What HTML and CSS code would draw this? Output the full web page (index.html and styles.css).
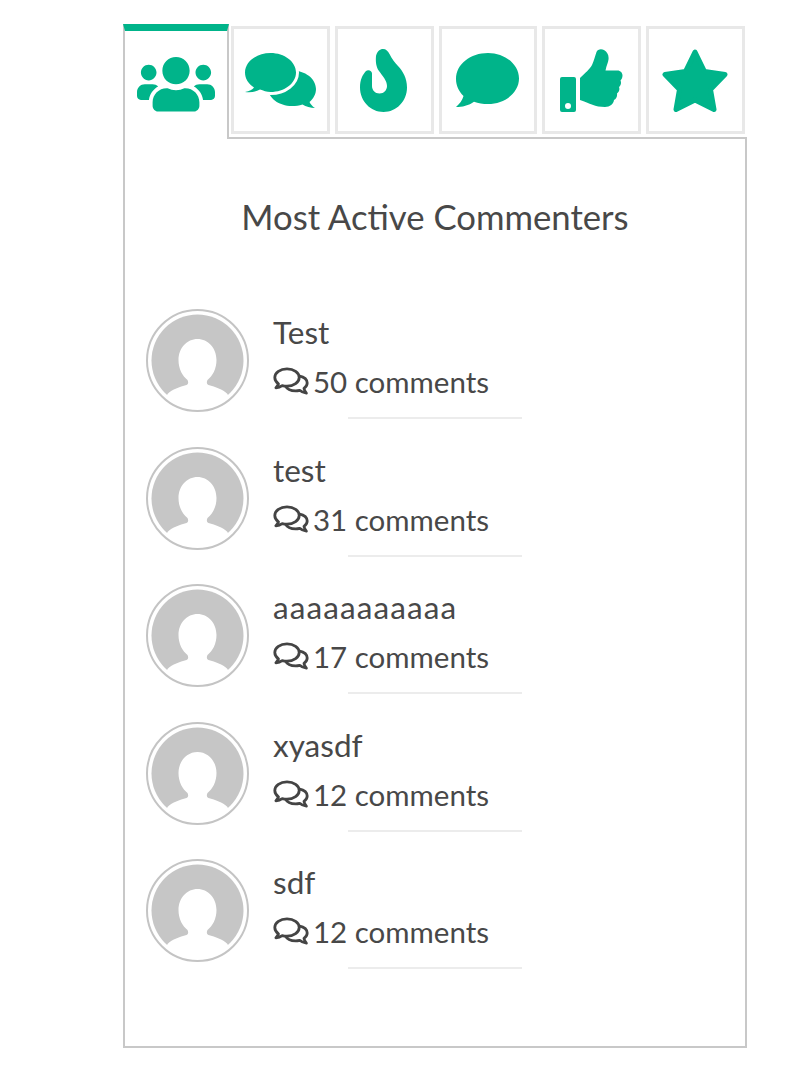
FILE: index.html
```html
<!DOCTYPE html>
<html lang="en">
<head>
<meta charset="utf-8">
<title>Most Active Commenters</title>
<link rel="stylesheet" href="styles.css">
</head>
<body>
<svg class="defs" width="0" height="0" aria-hidden="true">
  <defs>
    <symbol id="avatar" viewBox="0 0 103 103">
      <circle cx="51.5" cy="51.5" r="50.5" fill="#fff" stroke="#c4c4c4" stroke-width="2"/>
      <circle cx="51.5" cy="51.5" r="46" fill="#c6c6c6"/>
      <clipPath id="avatar-clip"><circle cx="51.5" cy="51.5" r="48.500"/></clipPath>
      <path clip-path="url(#avatar-clip)" fill="#fff" d="M51.5 30c-10.500 0-19 9-19 21 0 9 4 16 9 20 1 2 1 4-1 5-7 2-14 4-19 9l-6 18h72l-6-18c-5-5-12-7-19-9-2-1-2-3-1-5 5-4 9-11 9-20 0-12-8.500-21-19-21z"/>
    </symbol>
    <symbol id="small-comments" viewBox="0 0 36 28">
      <g fill="none" stroke="#444" stroke-width="2.800" stroke-linejoin="round">
        <path d="M14 1.800c-6.800 0-12.200 3.900-12.200 8.700 0 2.600 1.500 4.800 3.700 6.300-.5 1.500-1.400 2.900-2.600 4 2.400-.2 4.600-1 6.300-2.200 1.500.4 3.100.6 4.800.6 6.800 0 12.200-3.900 12.200-8.700S20.800 1.800 14 1.800z"/>
        <path d="M26 8.800c4.800 1 8.200 3.700 8.200 7.200 0 2.200-1.300 4-3.200 5.400.3 1.700 1.100 3.300 2.400 4.800-2.800-.3-5-1.400-6.700-2.900-1.300.3-2.600.5-4 .5-4.800 0-8.800-2-10.300-5"/>
      </g>
    </symbol>
  </defs>
</svg>
<main class="widget">
  <nav class="tabs">
    <a class="tab-active">
      <svg class="icon-users" viewBox="0 0 640 448"><path transform="translate(0 -32)" d="M96 224c35.300 0 64-28.700 64-64s-28.700-64-64-64-64 28.700-64 64 28.700 64 64 64zm448 0c35.300 0 64-28.700 64-64s-28.700-64-64-64-64 28.700-64 64 28.700 64 64 64zm32 32h-64c-17.600 0-33.500 7.100-45.100 18.600 40.300 22.100 68.900 62 75.100 109.400h66c17.700 0 32-14.300 32-32v-32c0-35.300-28.700-64-64-64zm-256 0c61.900 0 112-50.100 112-112S381.900 32 320 32 208 82.100 208 144s50.100 112 112 112zm76.800 32h-8.300c-20.800 10-43.900 16-68.500 16s-47.600-6-68.500-16h-8.300C179.600 288 128 339.600 128 403.200V432c0 26.500 21.500 48 48 48h288c26.500 0 48-21.500 48-48v-28.800c0-63.600-51.600-115.200-115.200-115.200zm-223.700-13.400C161.500 263.100 145.600 256 128 256H64c-35.300 0-64 28.700-64 64v32c0 17.700 14.300 32 32 32h65.900c6.300-47.400 34.900-87.300 75.200-109.400z"/></svg>
    </a>
    <div class="tab-group">
      <a class="tab">
        <svg class="icon-comments" viewBox="0 0 71 55"><path d="M47 17.500c13 0 24 8 24 18.500 0 5-2.500 9.500-6.500 13 .8 2 2.800 4.300 5.500 6-4.500 0-9-1.200-12.500-3.500-3.300 1-6.800 1.500-10.500 1.500-13 0-24-8-24-18 0-10.500 11-17.500 24-17.500z"/><path stroke="#fff" stroke-width="6" paint-order="stroke" d="M25.500 0C11.500 0 0 8.700 0 19.500c0 6 3.500 11.500 9 15-1.500 2-4.500 4-9 4.500 5.500 1 11-.300 15-2.500 3.300 1 6.800 2.500 10.500 2.500C39.500 39 51 30.300 51 19.500S39.500 0 25.500 0z"/></svg>
      </a>
      <a class="tab">
        <svg class="icon-flame" viewBox="0 0 47 63"><path d="M23 0c3 0 5 2 6.500 5 2.500 5 5 8 8.500 12 5 5.500 9 12 9 21.500C47 52 36.500 63 23.500 63S0 52 0 38.500C0 31 2.500 26 5.500 22.500c2.500-2.500 6.500-1 6.500 2L12 37C12 41 15 44.500 19.500 44.500S27 41 27 37C27 31.500 22.500 27 19 22 16 18 15.500 12 16 7 17 2.500 20 0 23 0z"/></svg>
      </a>
      <a class="tab">
        <svg class="icon-bubble" viewBox="0 0 63 54"><path d="M32 0C14.500 0 0 11 0 26c0 6.500 2.800 12.500 7.500 17C6.500 47 3.500 51 0 54c6 0 13-1.500 18-5.300 4.200 1.500 9 2.300 14 2.300 17 0 31-11.500 31-25.500S49 0 32 0z"/></svg>
      </a>
      <a class="tab">
        <svg class="icon-thumb" viewBox="0 0 63 63"><path fill-rule="evenodd" d="M2 28h12a2 2 0 0 1 2 2v31a2 2 0 0 1-2 2H2a2 2 0 0 1-2-2V30a2 2 0 0 1 2-2zm6 26a3 3 0 1 0 0 6 3 3 0 0 0 0-6z"/><path d="M20 29c5-5 10-9 12-13 2-4 3-9 4.500-13 1-3 5-3.500 7.500-2 3.500 2 5 5.500 4.500 9.500-.3 3-2 6-3 11h12c3 0 5 2.500 5 5 0 2-1 4-2 5 1 2 .5 5-1.500 6.500 1 2.500 0 5-2 6.500.5 3-1 5.500-3 6.500-.500 4-4 7-9 7-10 0-15-3.500-25-7z"/></svg>
      </a>
      <a class="tab">
        <svg class="icon-star" viewBox="0 0 66 63"><path stroke="#00b48a" stroke-width="5" stroke-linejoin="round" d="M33 3l9.500 19.500L63 25.500 48.500 40.500l3.500 20-19-9.500-19 9.500 3.500-20L3 25.500l20.500-3z"/></svg>
      </a>
    </div>
  </nav>
  <section class="panel">
    <h2 class="title">Most Active Commenters</h2>
    <ul class="list">
      <li class="row">
        <svg class="avatar"><use href="#avatar"/></svg>
        <div class="info">
          <div class="name">Test</div>
          <div class="count"><svg class="count-icon"><use href="#small-comments"/></svg><span>50 comments</span></div>
          <div class="divider"></div>
        </div>
      </li>
      <li class="row">
        <svg class="avatar"><use href="#avatar"/></svg>
        <div class="info">
          <div class="name">test</div>
          <div class="count"><svg class="count-icon"><use href="#small-comments"/></svg><span>31 comments</span></div>
          <div class="divider"></div>
        </div>
      </li>
      <li class="row">
        <svg class="avatar"><use href="#avatar"/></svg>
        <div class="info">
          <div class="name name-wide">aaaaaaaaaaa</div>
          <div class="count"><svg class="count-icon"><use href="#small-comments"/></svg><span>17 comments</span></div>
          <div class="divider"></div>
        </div>
      </li>
      <li class="row">
        <svg class="avatar"><use href="#avatar"/></svg>
        <div class="info">
          <div class="name">xyasdf</div>
          <div class="count"><svg class="count-icon"><use href="#small-comments"/></svg><span>12 comments</span></div>
          <div class="divider"></div>
        </div>
      </li>
      <li class="row">
        <svg class="avatar"><use href="#avatar"/></svg>
        <div class="info">
          <div class="name">sdf</div>
          <div class="count"><svg class="count-icon"><use href="#small-comments"/></svg><span>12 comments</span></div>
          <div class="divider"></div>
        </div>
      </li>
    </ul>
  </section>
</main>
</body>
</html>
```
FILE: styles.css
```css
* { box-sizing: border-box; }
html, body { margin: 0; padding: 0; background: #fff; }
body { font-family: "Lato", "Noto Sans", sans-serif; color: #484848; }
.defs { position: absolute; }
.widget { width: 624px; margin: 24px 0 0 123px; }
.tabs { display: flex; height: 113px; }
.tab-active {
  position: relative;
  z-index: 1;
  flex: 0 0 106px;
  height: 115px;
  background: #fff;
  border-top: 7px solid #00b48a;
  border-left: 2px solid #c8c8c8;
  border-right: 2px solid #c8c8c8;
  padding-top: 26px;
  display: flex;
  justify-content: center;
  align-items: flex-start;
}
.tab-group { flex: 1; display: flex; gap: 5px; margin: 2px 2px 0 2px; height: 108px; }
.tab {
  flex: 1;
  border: 3px solid #e8e8e8;
  display: flex;
  align-items: center;
  justify-content: center;
}
.tab svg, .tab-active svg { fill: #00b48a; display: block; }
.icon-users { width: 78px; height: 54.600px; }
.icon-comments { width: 71px; height: 55px; }
.icon-flame { width: 47px; height: 63px; margin-left: -2px; }
.icon-bubble { width: 63px; height: 54px; }
.icon-thumb { width: 63px; height: 63px; }
.icon-star { width: 66px; height: 63px; margin-left: -2px; }
.panel { height: 911px; border: 2px solid #c8c8c8; padding: 56px 21px 0; }
.title { margin: 0; font-size: 34.700px; line-height: 44px; font-weight: 400; text-align: center; color: #484848; }
.list { list-style: none; margin: 70px 0 0; padding: 0; }
.row { display: flex; height: 137.500px; align-items: flex-start; }
.avatar { flex: none; width: 103px; height: 103px; display: block; }
.info { margin: -2px 0 0 24px; width: 260px; }
.name { font-size: 31.500px; line-height: 50px; }
.name-wide { letter-spacing: 1.100px; }
.count { display: flex; align-items: center; gap: 4px; font-size: 29.500px; line-height: 50px; }
.count-icon { width: 36px; height: 28px; flex: none; margin-top: -2px; }
.divider { width: 174px; height: 2px; margin: 10px 0 0 75px; background: #ececec; }
```
